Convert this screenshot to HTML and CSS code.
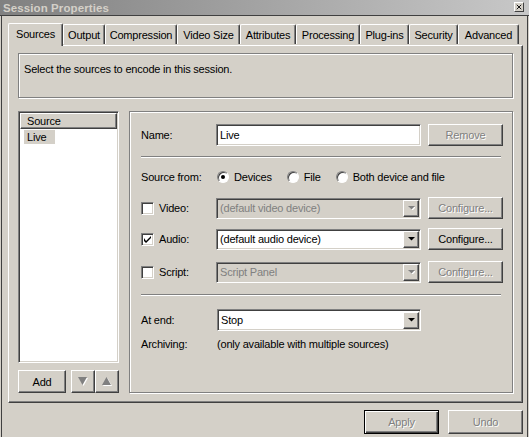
FILE: index.html
```html
<!DOCTYPE html>
<html>
<head>
<meta charset="utf-8">
<title>Session Properties</title>
<link rel="stylesheet" href="styles.css">
</head>
<body>
<div class="window">
  <div class="titlebar">
    <span class="title">Session Properties</span>
    <span class="close">
      <svg width="8" height="8" viewBox="0 0 8 8"><path d="M1 1L7 7M7 1L1 7" stroke="#000" stroke-width="1.2"/></svg>
    </span>
  </div>
  <div class="body">
    <div class="tabs">
      <div class="tab active t-sources">Sources</div>
      <div class="tab t-output">Output</div>
      <div class="tab t-compression">Compression</div>
      <div class="tab t-videosize">Video Size</div>
      <div class="tab t-attributes">Attributes</div>
      <div class="tab t-processing">Processing</div>
      <div class="tab t-plugins">Plug-ins</div>
      <div class="tab t-security">Security</div>
      <div class="tab t-advanced">Advanced</div>
    </div>
    <div class="panel">
      <div class="group desc">Select the sources to encode in this session.</div>
      <div class="main">
        <div class="left">
          <div class="listbox">
            <div class="list-header">Source</div>
            <div class="list-item"><span class="sel">Live</span></div>
          </div>
          <div class="left-buttons">
            <div class="btn add">Add</div>
            <div class="arrows">
              <div class="btn arrow">
                <svg width="10" height="9" viewBox="0 0 10 9"><polygon points="1,1 10,1 5.5,9" fill="#fff"/><polygon points="0,0 9,0 4.5,8" fill="#808080"/></svg>
              </div>
              <div class="btn arrow">
                <svg width="10" height="9" viewBox="0 0 10 9"><polygon points="1,9 10,9 5.5,1" fill="#fff"/><polygon points="0,8 9,8 4.5,0" fill="#808080"/></svg>
              </div>
            </div>
          </div>
        </div>
        <div class="group props">
          <div class="row name-row">
            <span class="label">Name:</span>
            <div class="field textbox">Live</div>
            <div class="btn side disabled">Remove</div>
          </div>
          <div class="sep sep1"></div>
          <div class="row source-row">
            <span class="label">Source from:</span>
            <span class="radio checked"></span><span class="opt">Devices</span>
            <span class="radio"></span><span class="opt">File</span>
            <span class="radio"></span><span class="opt">Both device and file</span>
          </div>
          <div class="row dev-row video-row">
            <span class="label chk-label"><span class="check"></span>Video:</span>
            <div class="field combo disabled"><span class="ctext">(default video device)</span><span class="drop"><svg width="7" height="4" viewBox="0 0 7 4"><polygon points="1,1 8,1 4.5,4.5" fill="#fff"/><polygon points="0,0 7,0 3.5,3.5" fill="#808080"/></svg></span></div>
            <div class="btn side disabled">Configure...</div>
          </div>
          <div class="row dev-row audio-row">
            <span class="label chk-label"><span class="check">
              <svg width="7" height="7" viewBox="0 0 7 7"><path d="M0 2L0 5L2 7L7 2L7 0L2 5Z" fill="#000"/></svg>
            </span>Audio:</span>
            <div class="field combo"><span class="ctext">(default audio device)</span><span class="drop"><svg width="7" height="4" viewBox="0 0 7 4"><polygon points="0,0 7,0 3.5,3.5" fill="#000"/></svg></span></div>
            <div class="btn side">Configure...</div>
          </div>
          <div class="row dev-row script-row">
            <span class="label chk-label"><span class="check"></span>Script:</span>
            <div class="field combo disabled"><span class="ctext">Script Panel</span><span class="drop"><svg width="7" height="4" viewBox="0 0 7 4"><polygon points="1,1 8,1 4.5,4.5" fill="#fff"/><polygon points="0,0 7,0 3.5,3.5" fill="#808080"/></svg></span></div>
            <div class="btn side disabled">Configure...</div>
          </div>
          <div class="sep sep2"></div>
          <div class="row end-row">
            <span class="label">At end:</span>
            <div class="field combo"><span class="ctext">Stop</span><span class="drop"><svg width="7" height="4" viewBox="0 0 7 4"><polygon points="0,0 7,0 3.5,3.5" fill="#000"/></svg></span></div>
          </div>
          <div class="row arch-row">
            <span class="label">Archiving:</span>
            <span class="value">(only available with multiple sources)</span>
          </div>
        </div>
      </div>
    </div>
    <div class="footer">
      <div class="btn default disabled">Apply</div>
      <div class="btn disabled">Undo</div>
    </div>
  </div>
</div>
</body>
</html>
```

FILE: styles.css
```css
* { box-sizing: border-box; }

body {
  margin: 0;
  font-family: "Liberation Sans", Arial, sans-serif;
  font-size: 11px;
  letter-spacing: -0.2px;
  color: #000;
  background: #D4D0C8;
}

.window {
  width: 529px;
  height: 437px;
  background: #D4D0C8;
  overflow: hidden;
  display: flex;
  flex-direction: column;
}

.titlebar {
  height: 16px;
  flex: none;
  background: linear-gradient(to right, #808080, #C8C8C8);
  border-bottom: 1px solid #404040;
  display: flex;
  align-items: center;
  justify-content: space-between;
  padding: 0 5px 0 3px;
}

.title {
  font-weight: bold;
  font-size: 11.5px;
  color: #D4D0C8;
  letter-spacing: 0.1px;
}

.close {
  width: 10px;
  height: 10px;
  background: #D4D0C8;
  border: 1px solid;
  border-color: #fff #404040 #404040 #fff;
  display: flex;
  align-items: center;
  justify-content: center;
  margin-top: -1px;
}
.close svg { width: 6px; height: 6px; }

.body {
  flex: 1;
  margin: 0 1px;
  border-left: 1px solid #404040;
  border-right: 1px solid #404040;
  display: flex;
  flex-direction: column;
}

/* tabs */
.tabs {
  display: flex;
  align-items: flex-end;
  margin-top: 6px;
  padding-left: 8px;
  height: 23px;
  position: relative;
  z-index: 1;
}

.tab {
  height: 20px;
  flex: none;
  display: flex;
  align-items: center;
  justify-content: center;
  border-top: 1px solid #fff;
  border-left: 1px solid #fff;
  border-right: 1px solid #404040;
  box-shadow: inset -1px 0 #808080;
  border-radius: 2px 2px 0 0;
  white-space: nowrap;
  margin-bottom: 1px;
}

.t-output { width: 42px; }
.t-compression { width: 72px; }
.t-videosize { width: 63px; }
.t-attributes { width: 56px; }
.t-processing { width: 64px; }
.t-plugins { width: 49px; }
.t-security { width: 49px; }
.t-advanced { width: 61px; }

.tab.active {
  width: 55px;
  height: 23px;
  margin-left: -2px;
  padding-bottom: 3px;
  margin-bottom: -1px;
  background: #D4D0C8;
  position: relative;
  z-index: 2;
}

.panel {
  margin: 0 4px 0 6px;
  height: 358px;
  border: 1px solid;
  border-color: #fff #404040 #404040 #fff;
  box-shadow: inset -1px -1px #808080;
  padding: 7px 9px 9px 9px;
  display: flex;
  flex-direction: column;
}

.group {
  border: 1px solid #808080;
  box-shadow: inset 1px 1px #fff, 1px 1px #fff;
}

.desc {
  height: 45px;
  padding: 9px 0 0 5px;
}

.main {
  flex: 1;
  margin-top: 13px;
  display: flex;
  gap: 10px;
}

.left {
  width: 101px;
  display: flex;
  flex-direction: column;
}

.listbox {
  flex: 1;
  background: #fff;
  border: 1px solid;
  border-color: #808080 #fff #fff #808080;
  box-shadow: inset 1px 1px #404040, inset -1px -1px #D4D0C8;
  padding: 1px;
}

.list-header {
  height: 16px;
  background: #D4D0C8;
  border: 1px solid;
  border-color: #fff #404040 #404040 #fff;
  box-shadow: inset -1px -1px #808080;
  padding: 1px 0 0 6px;
}

.list-item {
  padding: 1px 0 0 4px;
}

.sel {
  display: inline-block;
  background: #D4D0C8;
  padding: 1px 9px 1px 3px;
}

.left-buttons {
  margin-top: 7px;
  display: flex;
  gap: 5px;
}

.btn {
  height: 23px;
  background: #D4D0C8;
  border: 1px solid;
  border-color: #fff #404040 #404040 #fff;
  box-shadow: inset -1px -1px #808080;
  display: flex;
  align-items: center;
  justify-content: center;
  white-space: nowrap;
}

.btn.disabled {
  color: #808080;
  text-shadow: 1px 1px #fff;
}

.add { width: 49px; }

.arrows { display: flex; }
.arrow { width: 24px; }

.props {
  flex: 1;
  padding: 12px 9px 0 11px;
  display: flex;
  flex-direction: column;
}

.row {
  display: flex;
  align-items: center;
}

.label {
  width: 75px;
  flex: none;
  display: flex;
  align-items: center;
}

.field {
  height: 22px;
  width: 205px;
  border: 1px solid;
  border-color: #808080 #fff #fff #808080;
  box-shadow: inset 1px 1px #404040, inset -1px -1px #D4D0C8;
  background: #fff;
  display: flex;
  align-items: center;
}

.textbox {
  padding-left: 3px;
}

.side {
  width: 75px;
  margin-left: auto;
  height: 22px;
}

.sep {
  height: 2px;
  border-top: 1px solid #808080;
  border-bottom: 1px solid #fff;
  margin-right: 2px;
}
.sep1 { margin-top: 10px; }
.sep2 { margin-top: 11px; }

.source-row { margin-top: 11px; height: 16px; }
.video-row { margin-top: 12px; }
.audio-row { margin-top: 9px; }
.script-row { margin-top: 11px; }
.end-row { margin-top: 13px; }
.arch-row { margin-top: 6px; height: 14px; }

.dev-row .field { height: 21px; }
.end-row .field { height: 22px; width: 204px; margin-left: 1px; }

.radio {
  width: 12px;
  height: 12px;
  border-radius: 50%;
  background: #fff;
  border: 1px solid;
  border-color: #808080 #fff #fff #808080;
  box-shadow: inset 1px 1px #404040;
  position: relative;
  margin-left: 1px;
  flex: none;
}
.radio.checked::after {
  content: "";
  position: absolute;
  left: 3px;
  top: 3px;
  width: 4px;
  height: 4px;
  border-radius: 50%;
  background: #000;
}

.opt {
  margin-left: 5px;
  margin-right: 14px;
}

.check {
  width: 13px;
  height: 13px;
  background: #fff;
  border: 1px solid;
  border-color: #808080 #fff #fff #808080;
  box-shadow: inset 1px 1px #404040, inset -1px -1px #D4D0C8;
  margin-right: 5px;
  display: flex;
  align-items: center;
  justify-content: center;
}

.combo {
  padding-left: 3px;
  position: relative;
}

.combo .ctext { flex: 1; }

.combo.disabled {
  background: #D4D0C8;
  color: #808080;
}

.drop {
  width: 16px;
  height: 17px;
  margin-right: 1px;
  background: #D4D0C8;
  border: 1px solid;
  border-color: #fff #404040 #404040 #fff;
  box-shadow: inset -1px -1px #808080, inset 1px 1px #D4D0C8;
  display: flex;
  align-items: center;
  justify-content: center;
}

.value { margin-left: 1px; }

.footer {
  display: flex;
  justify-content: flex-end;
  gap: 9px;
  margin-top: 7px;
  padding-right: 4px;
}

.footer .btn {
  width: 75px;
  height: 24px;
}

.btn.default {
  border: 1px solid #000;
  box-shadow: inset 1px 1px #fff, inset -1px -1px #404040, inset -2px -2px #808080;
}
```
